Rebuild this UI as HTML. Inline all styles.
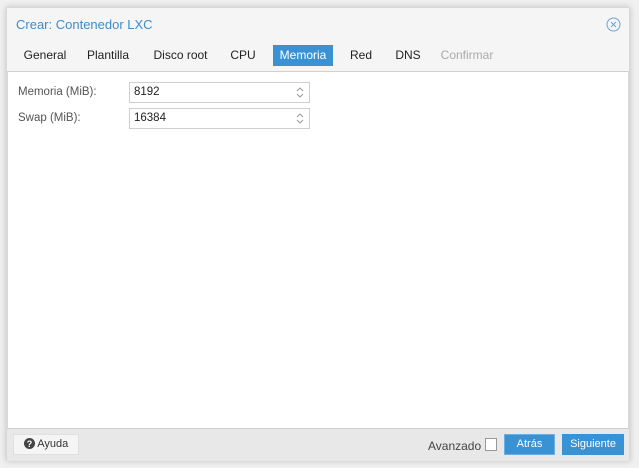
<!DOCTYPE html>
<html><head><style>
*{box-sizing:border-box;margin:0;padding:0}
body{width:639px;height:468px;background:#f0f0f0;font-family:"Liberation Sans",Arial,sans-serif;font-size:12px;color:#333;position:relative;overflow:hidden}
.dlg{position:absolute;left:6px;top:7px;width:624px;height:454px;background:#f5f5f5;border:1px solid #d8d8d8;box-shadow:0 0 6px rgba(0,0,0,.2)}
.title{position:absolute;left:9px;top:9px;font-size:13px;color:#3d8ccc}
.close{position:absolute;right:8px;top:9px}
.tab{position:absolute;top:37px;height:21px;line-height:21px;font-size:12px;color:#222;text-align:center}
.tab.act{background:#3892d4;color:#fff}
.body{position:absolute;left:0;top:63px;width:622px;height:358px;background:#fff;border-top:1px solid #d0d0d0;border-bottom:1px solid #d0d0d0;border-left:1px solid #d8d8d8;border-right:1px solid #d8d8d8}
.lbl{position:absolute;left:10px;color:#555;font-size:11.5px}
.inp{position:absolute;left:121px;width:181px;height:21px;border:1px solid #cfcfcf;padding-left:4px;line-height:19px;color:#222;font-size:11.5px}
.sp{position:absolute;right:5px;top:3px}
.foot{position:absolute;left:0;top:421px;width:622px;height:32px;background:#e8e8e8}
.btn{position:absolute;top:5px;height:21px;line-height:19px;text-align:center;font-size:11px;border:1px solid transparent}
</style></head><body>
<div class="dlg">
<div class="title">Crear: Contenedor LXC</div>
<svg class="close" width="15" height="15" viewBox="0 0 15 15"><circle cx="7.5" cy="7.5" r="6.5" fill="none" stroke="#6fa3cf" stroke-width="1"/><path d="M5 5L10 10M10 5L5 10" stroke="#6fa3cf" stroke-width="1"/></svg>
<div class="tab" style="left:9px;width:58px">General</div>
<div class="tab" style="left:75px;width:52px">Plantilla</div>
<div class="tab" style="left:141px;width:65px">Disco root</div>
<div class="tab" style="left:220px;width:32px">CPU</div>
<div class="tab act" style="left:266px;width:60px">Memoria</div>
<div class="tab" style="left:338px;width:32px">Red</div>
<div class="tab" style="left:384px;width:34px">DNS</div>
<div class="tab" style="left:430px;width:60px;color:#aaa">Confirmar</div>
<div class="body">
<div class="lbl" style="top:14px">Memoria (MiB):</div>
<div class="inp" style="top:10px">8192<svg class="sp" width="8" height="13" viewBox="0 0 8 13"><path d="M1 5L4 2L7 5M1 8L4 11L7 8" fill="none" stroke="#999" stroke-width="1"/></svg></div>
<div class="lbl" style="top:40px">Swap (MiB):</div>
<div class="inp" style="top:36px">16384<svg class="sp" width="8" height="13" viewBox="0 0 8 13"><path d="M1 5L4 2L7 5M1 8L4 11L7 8" fill="none" stroke="#999" stroke-width="1"/></svg></div>
</div>
<div class="foot">
<div class="btn" style="left:6px;width:66px;background:#f5f5f5;border-color:#e0e0e0;color:#333"><svg width="11" height="11" viewBox="0 0 11 11" style="vertical-align:-2px"><circle cx="5.5" cy="5.5" r="5.5" fill="#444"/><text x="5.5" y="9" font-size="9" font-weight="bold" fill="#fff" text-anchor="middle" font-family="Liberation Sans">?</text></svg> Ayuda</div>
<div style="position:absolute;left:421px;top:10px;color:#444">Avanzado</div>
<div style="position:absolute;left:478px;top:9px;width:12px;height:13px;border:1px solid #999;background:#fff"></div>
<div class="btn" style="left:497px;width:51px;background:#3892d4;border-color:#6ab0e4;color:#fff">Atrás</div>
<div class="btn" style="left:555px;width:62px;background:#3892d4;color:#fff">Siguiente</div>
</div>
</div>
</body></html>
